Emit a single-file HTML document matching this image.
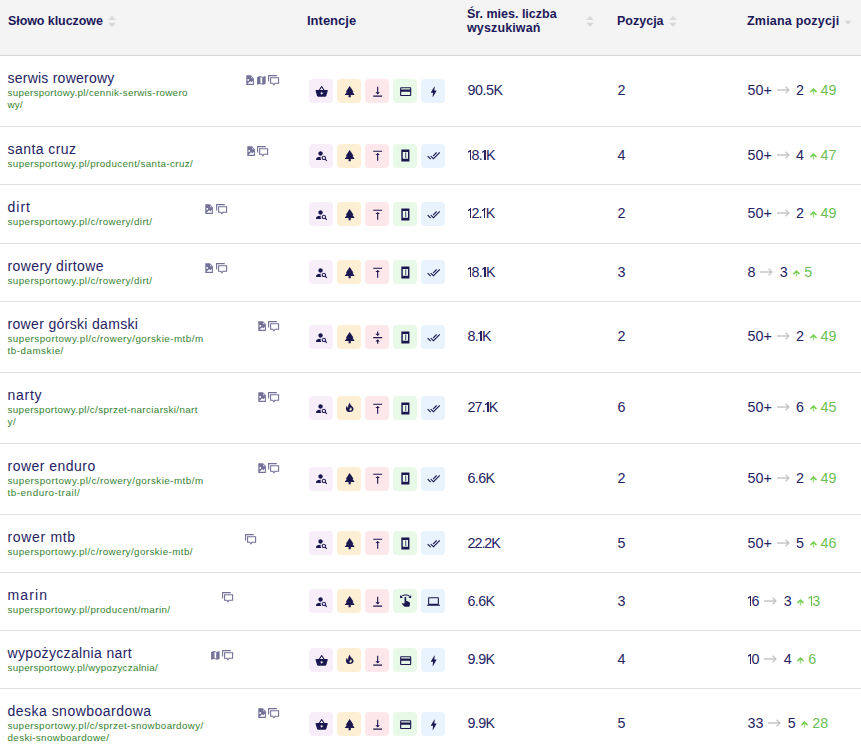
<!DOCTYPE html><html><head><meta charset="utf-8"><style>
html,body{margin:0;padding:0;background:#fff;}
body{width:861px;height:751px;overflow:hidden;position:relative;font-family:"Liberation Sans",sans-serif;}
.t{position:absolute;white-space:nowrap;}
.hd{position:absolute;left:0;top:0;width:861px;height:55px;background:#f4f4f4;}
.ln{position:absolute;left:0;width:861px;height:1px;background:#e0e0e0;}
.kw{font-size:14px;line-height:14px;color:#262364;}
.url{font-size:9.8px;line-height:11px;color:#358230;}
.th{font-size:12.5px;line-height:13px;font-weight:bold;color:#1d195a;}
.num{font-size:14.3px;line-height:14px;color:#262364;}
.b{position:absolute;width:24px;height:24px;border-radius:4px;}
.b svg{position:absolute;left:5px;top:5px;}
.s{position:absolute;line-height:0;}
.ch{display:flex;align-items:baseline;}
.one{display:inline-block;width:3.8px;height:10px;position:relative;margin-left:0.2px}.one::before{content:"";position:absolute;left:2.2px;top:0;width:1.4px;height:10px;background:currentColor}.one::after{content:"";position:absolute;left:0;top:0;width:3.6px;height:3.4px;background:currentColor;clip-path:polygon(100% 0,100% 42%,0 100%,0 58%)}

</style></head><body>
<div class="hd"></div><div class="ln" style="top:55px;background:#d9d9d9"></div>
<span class="t th" style="left:8px;top:15.38px;letter-spacing:-0.077px;">Słowo kluczowe</span>
<span class="t th" style="left:467px;top:8.38px;letter-spacing:0.000px;">Śr. mies. liczba</span>
<span class="t th" style="left:467px;top:22.38px;letter-spacing:0.133px;">wyszukiwań</span>
<span class="t th" style="left:617px;top:15.38px;letter-spacing:0.000px;">Pozycja</span>
<span class="t th" style="left:747px;top:15.38px;letter-spacing:0.200px;">Zmiana pozycji</span>
<span class="t th" style="left:307px;top:13.95px;font-size:13px;">Intencje</span>
<svg class="s" style="left:108px;top:15px" width="9" height="13" viewBox="0 0 9 13"><path d="M0.1 4.9L4 0.9 7.9 4.9z" fill="#d8d8d8"/><path d="M0.1 7.8L4 12 7.9 7.8z" fill="#d8d8d8"/></svg>
<svg class="s" style="left:585.8px;top:15px" width="9" height="13" viewBox="0 0 9 13"><path d="M0.1 4.9L4 0.9 7.9 4.9z" fill="#d8d8d8"/><path d="M0.1 7.8L4 12 7.9 7.8z" fill="#d8d8d8"/></svg>
<svg class="s" style="left:668.5px;top:15px" width="9" height="13" viewBox="0 0 9 13"><path d="M0.1 4.9L4 0.9 7.9 4.9z" fill="#d8d8d8"/><path d="M0.1 7.8L4 12 7.9 7.8z" fill="#d8d8d8"/></svg>
<svg class="s" style="left:844px;top:19.7px" width="8" height="6" viewBox="0 0 8 6"><path d="M0.5 0.8L4 4.5 7.5 0.8z" fill="#d3d3d3"/></svg>
<span class="t kw" style="left:7.5px;top:71.10px;letter-spacing:0.236px;">serwis rowerowy</span>
<span class="t url" style="left:7.5px;top:86.67px;letter-spacing:0.314px;">supersportowy.pl/cennik-serwis-rowero</span>
<span class="t url" style="left:7.5px;top:98.67px;letter-spacing:0.250px;">wy/</span>
<div class="s" style="left:246px;top:75px"><svg width="9" height="11" viewBox="0 0 9 11"><path d="M0.3 0.3H5L7.9 3.2V10H0.3Z" fill="#737197"/><path d="M5.1 1.3V3.2H7Z" fill="#fff" opacity=".75"/><circle cx="2.2" cy="4.9" r="0.95" fill="#fff"/><path d="M1.4 8.7L4.1 6.2L5.4 7.2L6.9 5.8V8.7Z" fill="#fff"/></svg></div>
<div class="s" style="left:257.1px;top:75px"><svg width="10" height="11" viewBox="0 0 10 11"><path d="M3 1.45L5.75 2.3V9.3L3 8.45Z" fill="#fff" stroke="#737197" stroke-width="0.9"/><path d="M0.1 1.9L3 1V8.9L0.1 9.8Z" fill="#737197"/><path d="M5.7 1.9L8.6 1V8.9L5.7 9.8Z" fill="#737197"/></svg></div>
<div class="s" style="left:268px;top:75px"><svg width="12" height="11" viewBox="0 0 12 11"><path d="M0.6 6.6V0.6H8.8" fill="none" stroke="#737197" stroke-width="1.1"/><path d="M2.6 2.7h8v5.5H7l-1.1 1.6-1.1-1.6H2.6z" fill="none" stroke="#737197" stroke-width="1.1"/></svg></div>
<div class="b" style="left:309px;top:79px;background:#f8eefa"><svg style="left:5.7px;top:5.5px" width="13.33" height="13.33" viewBox="0 0 24 24" fill="#1a1650"><path d="M17.21 9l-4.38-6.56a1 1 0 0 0-1.66 0L6.79 9H2a1 1 0 0 0-1 1l.04.27 2.54 9.27A2 2 0 0 0 5.5 21h13a2 2 0 0 0 1.93-1.46l2.54-9.27L23 10a1 1 0 0 0-1-1h-4.79zM9 9l3-4.4L15 9H9zm3 8a2 2 0 1 1 0-4 2 2 0 0 1 0 4z"/></svg></div>
<div class="b" style="left:337px;top:79px;background:#fcefd3"><svg style="left:5.7px;top:5.5px" width="13.33" height="13.33" viewBox="0 0 24 24" fill="#1a1650"><path d="M17 12h2L12 2 5.05 12H7l-3.9 6h6.92v4h3.95v-4H21z"/></svg></div>
<div class="b" style="left:365px;top:79px;background:#fde7eb"><svg style="left:5.7px;top:5.5px" width="13.33" height="13.33" viewBox="0 0 24 24" fill="#1a1650"><path d="M16 13h-3V3h-2v10H8l4 4 4-4zM4 19v2h16v-2H4z"/></svg></div>
<div class="b" style="left:393px;top:79px;background:#e9f9e7"><svg style="left:5.7px;top:5.5px" width="13.33" height="13.33" viewBox="0 0 24 24" fill="#1a1650"><path d="M20 4H4c-1.11 0-1.99.89-1.99 2L2 18c0 1.11.89 2 2 2h16c1.11 0 2-.89 2-2V6c0-1.11-.89-2-2-2zm0 14H4v-6h16v6zm0-10H4V6h16v2z"/></svg></div>
<div class="b" style="left:421px;top:79px;background:#e8f3fd"><svg style="left:5.7px;top:5.5px" width="13.33" height="13.33" viewBox="0 0 24 24" fill="#1a1650"><path d="M11 21h-1l1-7H7.5c-.58 0-.57-.32-.38-.66.19-.34.05-.08.07-.12C8.48 10.94 10.42 7.54 13 3h1l-1 7h3.5c.49 0 .56.33.47.51l-.07.15C12.96 17.55 11 21 11 21z"/></svg></div>
<span class="t num" style="left:467.5px;top:83.05px;letter-spacing:-0.450px;">90.5K</span>
<span class="t num" style="left:617.5px;top:83.05px;">2</span>
<div class="t num ch" style="left:747.5px;top:83.05px"><span>50+</span><svg style="margin:0 6.3px 0 5px;align-self:center;position:relative;top:0px" width="13" height="8" viewBox="0 0 13 8"><path d="M0 4h12M8.6 0.8l3.3 3.2-3.3 3.2" fill="none" stroke="#c6c6c6" stroke-width="1.35"/></svg><span>2</span><svg style="margin:0 4px 0 5.6px" width="7" height="7" viewBox="0 0 7 7"><path d="M3.5 6.6V1.6" fill="none" stroke="#9cdc82" stroke-width="1.3"/><path d="M0.9 3.6l2.6-2.5 2.6 2.5" fill="none" stroke="#74cf52" stroke-width="1.5" stroke-linecap="round"/></svg><span style="color:#6cbf55">49</span></div>
<div class="ln" style="top:126px"></div>
<span class="t kw" style="left:7.5px;top:142.10px;letter-spacing:0.444px;">santa cruz</span>
<span class="t url" style="left:7.5px;top:157.67px;letter-spacing:0.392px;">supersportowy.pl/producent/santa-cruz/</span>
<div class="s" style="left:247px;top:146px"><svg width="9" height="11" viewBox="0 0 9 11"><path d="M0.3 0.3H5L7.9 3.2V10H0.3Z" fill="#737197"/><path d="M5.1 1.3V3.2H7Z" fill="#fff" opacity=".75"/><circle cx="2.2" cy="4.9" r="0.95" fill="#fff"/><path d="M1.4 8.7L4.1 6.2L5.4 7.2L6.9 5.8V8.7Z" fill="#fff"/></svg></div>
<div class="s" style="left:257px;top:146px"><svg width="12" height="11" viewBox="0 0 12 11"><path d="M0.6 6.6V0.6H8.8" fill="none" stroke="#737197" stroke-width="1.1"/><path d="M2.6 2.7h8v5.5H7l-1.1 1.6-1.1-1.6H2.6z" fill="none" stroke="#737197" stroke-width="1.1"/></svg></div>
<div class="b" style="left:309px;top:144px;background:#f8eefa"><svg style="left:5.7px;top:4.5px" width="13.33" height="13.33" viewBox="0 0 24 24" fill="#1a1650"><path d="M10 12c2.21 0 4-1.79 4-4s-1.79-4-4-4-4 1.79-4 4 1.79 4 4 4zm.35 2.01C7.62 13.910 2 15.27 2 18v2h9.54c-2.47-2.76-1.23-5.89-1.19-5.99zm9.08 4.01c.36-.59.57-1.28.57-2.02 0-2.21-1.79-4-4-4s-4 1.79-4 4 1.79 4 4 4c.74 0 1.43-.22 2.02-.57L20.59 22 22 20.59l-2.57-2.57zM16 18c-1.1 0-2-.9-2-2s.9-2 2-2 2 .9 2 2-.9 2-2 2z"/></svg></div>
<div class="b" style="left:337px;top:144px;background:#fcefd3"><svg style="left:5.7px;top:4.5px" width="13.33" height="13.33" viewBox="0 0 24 24" fill="#1a1650"><path d="M17 12h2L12 2 5.05 12H7l-3.9 6h6.92v4h3.95v-4H21z"/></svg></div>
<div class="b" style="left:365px;top:144px;background:#fde7eb"><svg style="left:5.7px;top:4.5px" width="13.33" height="13.33" viewBox="0 0 24 24" fill="#1a1650"><path d="M8 11h3v10h2V11h3l-4-4-4 4zM4 3v2h16V3H4z"/></svg></div>
<div class="b" style="left:393px;top:144px;background:#e9f9e7"><svg style="left:5.7px;top:4.5px" width="13.33" height="13.33" viewBox="0 0 24 24" fill="#1a1650"><path fill-rule="evenodd" d="M4.2 0.7H18.8V22.3H4.2ZM6.8 5.3V17.6H16.2V5.3Z"/><path d="M11.5 6.5H12.9V16.4H11.5Z"/></svg></div>
<div class="b" style="left:421px;top:144px;background:#e8f3fd"><svg style="left:5.7px;top:4.5px" width="13.33" height="13.33" viewBox="0 0 24 24" fill="#1a1650"><path d="M18 7l-1.41-1.41-6.34 6.34 1.41 1.41L18 7zm4.24-1.41L11.66 16.17 7.48 12l-1.41 1.41L11.66 19l12-12-1.42-1.41zM.41 13.41L6 19l1.41-1.41L1.83 12 .41 13.41z"/></svg></div>
<span class="t num" style="left:467.5px;top:147.54px;letter-spacing:-0.725px;"><i class="one"></i>8.<i class="one"></i>K</span>
<span class="t num" style="left:617.5px;top:147.54px;">4</span>
<div class="t num ch" style="left:747.5px;top:147.54px"><span>50+</span><svg style="margin:0 6.3px 0 5px;align-self:center;position:relative;top:0px" width="13" height="8" viewBox="0 0 13 8"><path d="M0 4h12M8.6 0.8l3.3 3.2-3.3 3.2" fill="none" stroke="#c6c6c6" stroke-width="1.35"/></svg><span>4</span><svg style="margin:0 4px 0 5.6px" width="7" height="7" viewBox="0 0 7 7"><path d="M3.5 6.6V1.6" fill="none" stroke="#9cdc82" stroke-width="1.3"/><path d="M0.9 3.6l2.6-2.5 2.6 2.5" fill="none" stroke="#74cf52" stroke-width="1.5" stroke-linecap="round"/></svg><span style="color:#6cbf55">47</span></div>
<div class="ln" style="top:184px"></div>
<span class="t kw" style="left:7.5px;top:200.10px;letter-spacing:1.000px;">dirt</span>
<span class="t url" style="left:7.5px;top:215.67px;letter-spacing:0.410px;">supersportowy.pl/c/rowery/dirt/</span>
<div class="s" style="left:205px;top:204px"><svg width="9" height="11" viewBox="0 0 9 11"><path d="M0.3 0.3H5L7.9 3.2V10H0.3Z" fill="#737197"/><path d="M5.1 1.3V3.2H7Z" fill="#fff" opacity=".75"/><circle cx="2.2" cy="4.9" r="0.95" fill="#fff"/><path d="M1.4 8.7L4.1 6.2L5.4 7.2L6.9 5.8V8.7Z" fill="#fff"/></svg></div>
<div class="s" style="left:216px;top:204px"><svg width="12" height="11" viewBox="0 0 12 11"><path d="M0.6 6.6V0.6H8.8" fill="none" stroke="#737197" stroke-width="1.1"/><path d="M2.6 2.7h8v5.5H7l-1.1 1.6-1.1-1.6H2.6z" fill="none" stroke="#737197" stroke-width="1.1"/></svg></div>
<div class="b" style="left:309px;top:202px;background:#f8eefa"><svg style="left:5.7px;top:5.5px" width="13.33" height="13.33" viewBox="0 0 24 24" fill="#1a1650"><path d="M10 12c2.21 0 4-1.79 4-4s-1.79-4-4-4-4 1.79-4 4 1.79 4 4 4zm.35 2.01C7.62 13.910 2 15.27 2 18v2h9.54c-2.47-2.76-1.23-5.89-1.19-5.99zm9.08 4.01c.36-.59.57-1.28.57-2.02 0-2.21-1.79-4-4-4s-4 1.79-4 4 1.79 4 4 4c.74 0 1.43-.22 2.02-.57L20.59 22 22 20.59l-2.57-2.57zM16 18c-1.1 0-2-.9-2-2s.9-2 2-2 2 .9 2 2-.9 2-2 2z"/></svg></div>
<div class="b" style="left:337px;top:202px;background:#fcefd3"><svg style="left:5.7px;top:5.5px" width="13.33" height="13.33" viewBox="0 0 24 24" fill="#1a1650"><path d="M17 12h2L12 2 5.05 12H7l-3.9 6h6.92v4h3.95v-4H21z"/></svg></div>
<div class="b" style="left:365px;top:202px;background:#fde7eb"><svg style="left:5.7px;top:5.5px" width="13.33" height="13.33" viewBox="0 0 24 24" fill="#1a1650"><path d="M8 11h3v10h2V11h3l-4-4-4 4zM4 3v2h16V3H4z"/></svg></div>
<div class="b" style="left:393px;top:202px;background:#e9f9e7"><svg style="left:5.7px;top:5.5px" width="13.33" height="13.33" viewBox="0 0 24 24" fill="#1a1650"><path fill-rule="evenodd" d="M4.2 0.7H18.8V22.3H4.2ZM6.8 5.3V17.6H16.2V5.3Z"/><path d="M11.5 6.5H12.9V16.4H11.5Z"/></svg></div>
<div class="b" style="left:421px;top:202px;background:#e8f3fd"><svg style="left:5.7px;top:5.5px" width="13.33" height="13.33" viewBox="0 0 24 24" fill="#1a1650"><path d="M18 7l-1.41-1.41-6.34 6.34 1.41 1.41L18 7zm4.24-1.41L11.66 16.17 7.48 12l-1.41 1.41L11.66 19l12-12-1.42-1.41zM.41 13.41L6 19l1.41-1.41L1.83 12 .41 13.41z"/></svg></div>
<span class="t num" style="left:467.5px;top:206.04px;letter-spacing:-0.850px;"><i class="one"></i>2.<i class="one"></i>K</span>
<span class="t num" style="left:617.5px;top:206.04px;">2</span>
<div class="t num ch" style="left:747.5px;top:206.04px"><span>50+</span><svg style="margin:0 6.3px 0 5px;align-self:center;position:relative;top:0px" width="13" height="8" viewBox="0 0 13 8"><path d="M0 4h12M8.6 0.8l3.3 3.2-3.3 3.2" fill="none" stroke="#c6c6c6" stroke-width="1.35"/></svg><span>2</span><svg style="margin:0 4px 0 5.6px" width="7" height="7" viewBox="0 0 7 7"><path d="M3.5 6.6V1.6" fill="none" stroke="#9cdc82" stroke-width="1.3"/><path d="M0.9 3.6l2.6-2.5 2.6 2.5" fill="none" stroke="#74cf52" stroke-width="1.5" stroke-linecap="round"/></svg><span style="color:#6cbf55">49</span></div>
<div class="ln" style="top:243px"></div>
<span class="t kw" style="left:7.5px;top:259.10px;letter-spacing:0.385px;">rowery dirtowe</span>
<span class="t url" style="left:7.5px;top:274.67px;letter-spacing:0.410px;">supersportowy.pl/c/rowery/dirt/</span>
<div class="s" style="left:205px;top:263px"><svg width="9" height="11" viewBox="0 0 9 11"><path d="M0.3 0.3H5L7.9 3.2V10H0.3Z" fill="#737197"/><path d="M5.1 1.3V3.2H7Z" fill="#fff" opacity=".75"/><circle cx="2.2" cy="4.9" r="0.95" fill="#fff"/><path d="M1.4 8.7L4.1 6.2L5.4 7.2L6.9 5.8V8.7Z" fill="#fff"/></svg></div>
<div class="s" style="left:216px;top:263px"><svg width="12" height="11" viewBox="0 0 12 11"><path d="M0.6 6.6V0.6H8.8" fill="none" stroke="#737197" stroke-width="1.1"/><path d="M2.6 2.7h8v5.5H7l-1.1 1.6-1.1-1.6H2.6z" fill="none" stroke="#737197" stroke-width="1.1"/></svg></div>
<div class="b" style="left:309px;top:260px;background:#f8eefa"><svg style="left:5.7px;top:5.5px" width="13.33" height="13.33" viewBox="0 0 24 24" fill="#1a1650"><path d="M10 12c2.21 0 4-1.79 4-4s-1.79-4-4-4-4 1.79-4 4 1.79 4 4 4zm.35 2.01C7.62 13.910 2 15.27 2 18v2h9.54c-2.47-2.76-1.23-5.89-1.19-5.99zm9.08 4.01c.36-.59.57-1.28.57-2.02 0-2.21-1.79-4-4-4s-4 1.79-4 4 1.79 4 4 4c.74 0 1.43-.22 2.02-.57L20.59 22 22 20.59l-2.57-2.57zM16 18c-1.1 0-2-.9-2-2s.9-2 2-2 2 .9 2 2-.9 2-2 2z"/></svg></div>
<div class="b" style="left:337px;top:260px;background:#fcefd3"><svg style="left:5.7px;top:5.5px" width="13.33" height="13.33" viewBox="0 0 24 24" fill="#1a1650"><path d="M17 12h2L12 2 5.05 12H7l-3.9 6h6.92v4h3.95v-4H21z"/></svg></div>
<div class="b" style="left:365px;top:260px;background:#fde7eb"><svg style="left:5.7px;top:5.5px" width="13.33" height="13.33" viewBox="0 0 24 24" fill="#1a1650"><path d="M8 11h3v10h2V11h3l-4-4-4 4zM4 3v2h16V3H4z"/></svg></div>
<div class="b" style="left:393px;top:260px;background:#e9f9e7"><svg style="left:5.7px;top:5.5px" width="13.33" height="13.33" viewBox="0 0 24 24" fill="#1a1650"><path fill-rule="evenodd" d="M4.2 0.7H18.8V22.3H4.2ZM6.8 5.3V17.6H16.2V5.3Z"/><path d="M11.5 6.5H12.9V16.4H11.5Z"/></svg></div>
<div class="b" style="left:421px;top:260px;background:#e8f3fd"><svg style="left:5.7px;top:5.5px" width="13.33" height="13.33" viewBox="0 0 24 24" fill="#1a1650"><path d="M18 7l-1.41-1.41-6.34 6.34 1.41 1.41L18 7zm4.24-1.41L11.66 16.17 7.48 12l-1.41 1.41L11.66 19l12-12-1.42-1.41zM.41 13.41L6 19l1.41-1.41L1.83 12 .41 13.41z"/></svg></div>
<span class="t num" style="left:467.5px;top:264.54px;letter-spacing:-0.725px;"><i class="one"></i>8.<i class="one"></i>K</span>
<span class="t num" style="left:617.5px;top:264.54px;">3</span>
<div class="t num ch" style="left:747.5px;top:264.54px"><span>8</span><svg style="margin:0 6.3px 0 5px;align-self:center;position:relative;top:0px" width="13" height="8" viewBox="0 0 13 8"><path d="M0 4h12M8.6 0.8l3.3 3.2-3.3 3.2" fill="none" stroke="#c6c6c6" stroke-width="1.35"/></svg><span>3</span><svg style="margin:0 4px 0 5.6px" width="7" height="7" viewBox="0 0 7 7"><path d="M3.5 6.6V1.6" fill="none" stroke="#9cdc82" stroke-width="1.3"/><path d="M0.9 3.6l2.6-2.5 2.6 2.5" fill="none" stroke="#74cf52" stroke-width="1.5" stroke-linecap="round"/></svg><span style="color:#6cbf55">5</span></div>
<div class="ln" style="top:301px"></div>
<span class="t kw" style="left:7.5px;top:317.10px;letter-spacing:0.333px;">rower górski damski</span>
<span class="t url" style="left:7.5px;top:332.67px;letter-spacing:0.466px;">supersportowy.pl/c/rowery/gorskie-mtb/m</span>
<span class="t url" style="left:7.5px;top:344.67px;letter-spacing:0.520px;">tb-damskie/</span>
<div class="s" style="left:258px;top:321px"><svg width="9" height="11" viewBox="0 0 9 11"><path d="M0.3 0.3H5L7.9 3.2V10H0.3Z" fill="#737197"/><path d="M5.1 1.3V3.2H7Z" fill="#fff" opacity=".75"/><circle cx="2.2" cy="4.9" r="0.95" fill="#fff"/><path d="M1.4 8.7L4.1 6.2L5.4 7.2L6.9 5.8V8.7Z" fill="#fff"/></svg></div>
<div class="s" style="left:268px;top:321px"><svg width="12" height="11" viewBox="0 0 12 11"><path d="M0.6 6.6V0.6H8.8" fill="none" stroke="#737197" stroke-width="1.1"/><path d="M2.6 2.7h8v5.5H7l-1.1 1.6-1.1-1.6H2.6z" fill="none" stroke="#737197" stroke-width="1.1"/></svg></div>
<div class="b" style="left:309px;top:325px;background:#f8eefa"><svg style="left:5.7px;top:5.5px" width="13.33" height="13.33" viewBox="0 0 24 24" fill="#1a1650"><path d="M10 12c2.21 0 4-1.79 4-4s-1.79-4-4-4-4 1.79-4 4 1.79 4 4 4zm.35 2.01C7.62 13.910 2 15.27 2 18v2h9.54c-2.47-2.76-1.23-5.89-1.19-5.99zm9.08 4.01c.36-.59.57-1.28.57-2.02 0-2.21-1.79-4-4-4s-4 1.79-4 4 1.79 4 4 4c.74 0 1.43-.22 2.02-.57L20.59 22 22 20.59l-2.57-2.57zM16 18c-1.1 0-2-.9-2-2s.9-2 2-2 2 .9 2 2-.9 2-2 2z"/></svg></div>
<div class="b" style="left:337px;top:325px;background:#fcefd3"><svg style="left:5.7px;top:5.5px" width="13.33" height="13.33" viewBox="0 0 24 24" fill="#1a1650"><path d="M17 12h2L12 2 5.05 12H7l-3.9 6h6.92v4h3.95v-4H21z"/></svg></div>
<div class="b" style="left:365px;top:325px;background:#fde7eb"><svg style="left:5.7px;top:5.5px" width="13.33" height="13.33" viewBox="0 0 24 24" fill="#1a1650"><path d="M8 19h3v4h2v-4h3l-4-4-4 4zm8-14h-3V1h-2v4H8l4 4 4-4zM4 11v2h16v-2H4z"/></svg></div>
<div class="b" style="left:393px;top:325px;background:#e9f9e7"><svg style="left:5.7px;top:5.5px" width="13.33" height="13.33" viewBox="0 0 24 24" fill="#1a1650"><path fill-rule="evenodd" d="M4.2 0.7H18.8V22.3H4.2ZM6.8 5.3V17.6H16.2V5.3Z"/><path d="M11.5 6.5H12.9V16.4H11.5Z"/></svg></div>
<div class="b" style="left:421px;top:325px;background:#e8f3fd"><svg style="left:5.7px;top:5.5px" width="13.33" height="13.33" viewBox="0 0 24 24" fill="#1a1650"><path d="M18 7l-1.41-1.41-6.34 6.34 1.41 1.41L18 7zm4.24-1.41L11.66 16.17 7.48 12l-1.41 1.41L11.66 19l12-12-1.42-1.41zM.41 13.41L6 19l1.41-1.41L1.83 12 .41 13.41z"/></svg></div>
<span class="t num" style="left:467.5px;top:329.04px;letter-spacing:-0.667px;">8.<i class="one"></i>K</span>
<span class="t num" style="left:617.5px;top:329.04px;">2</span>
<div class="t num ch" style="left:747.5px;top:329.04px"><span>50+</span><svg style="margin:0 6.3px 0 5px;align-self:center;position:relative;top:0px" width="13" height="8" viewBox="0 0 13 8"><path d="M0 4h12M8.6 0.8l3.3 3.2-3.3 3.2" fill="none" stroke="#c6c6c6" stroke-width="1.35"/></svg><span>2</span><svg style="margin:0 4px 0 5.6px" width="7" height="7" viewBox="0 0 7 7"><path d="M3.5 6.6V1.6" fill="none" stroke="#9cdc82" stroke-width="1.3"/><path d="M0.9 3.6l2.6-2.5 2.6 2.5" fill="none" stroke="#74cf52" stroke-width="1.5" stroke-linecap="round"/></svg><span style="color:#6cbf55">49</span></div>
<div class="ln" style="top:372px"></div>
<span class="t kw" style="left:7.5px;top:388.10px;letter-spacing:0.750px;">narty</span>
<span class="t url" style="left:7.5px;top:403.67px;letter-spacing:0.370px;">supersportowy.pl/c/sprzet-narciarski/nart</span>
<span class="t url" style="left:7.5px;top:415.67px;letter-spacing:0.700px;">y/</span>
<div class="s" style="left:258px;top:392px"><svg width="9" height="11" viewBox="0 0 9 11"><path d="M0.3 0.3H5L7.9 3.2V10H0.3Z" fill="#737197"/><path d="M5.1 1.3V3.2H7Z" fill="#fff" opacity=".75"/><circle cx="2.2" cy="4.9" r="0.95" fill="#fff"/><path d="M1.4 8.7L4.1 6.2L5.4 7.2L6.9 5.8V8.7Z" fill="#fff"/></svg></div>
<div class="s" style="left:268px;top:392px"><svg width="12" height="11" viewBox="0 0 12 11"><path d="M0.6 6.6V0.6H8.8" fill="none" stroke="#737197" stroke-width="1.1"/><path d="M2.6 2.7h8v5.5H7l-1.1 1.6-1.1-1.6H2.6z" fill="none" stroke="#737197" stroke-width="1.1"/></svg></div>
<div class="b" style="left:309px;top:396px;background:#f8eefa"><svg style="left:5.7px;top:5.5px" width="13.33" height="13.33" viewBox="0 0 24 24" fill="#1a1650"><path d="M10 12c2.21 0 4-1.79 4-4s-1.79-4-4-4-4 1.79-4 4 1.79 4 4 4zm.35 2.01C7.62 13.910 2 15.27 2 18v2h9.54c-2.47-2.76-1.23-5.89-1.19-5.99zm9.08 4.01c.36-.59.57-1.28.57-2.02 0-2.21-1.79-4-4-4s-4 1.79-4 4 1.79 4 4 4c.74 0 1.43-.22 2.02-.57L20.59 22 22 20.59l-2.57-2.57zM16 18c-1.1 0-2-.9-2-2s.9-2 2-2 2 .9 2 2-.9 2-2 2z"/></svg></div>
<div class="b" style="left:337px;top:396px;background:#fcefd3"><svg style="left:5.7px;top:5.5px" width="13.33" height="13.33" viewBox="0 0 24 24" fill="#1a1650"><path fill-rule="evenodd" d="M12 18.2C8.2 18.2 5.3 15.6 5.3 12C5.3 9.8 6.2 8 7.2 6.8C7.2 8.6 8 9.8 9.2 10.2C9 6.5 10.5 3 12.6 0.9C12.4 4 14 5.6 15.8 7.4C17.8 9.3 19 11 19 13.2C19 16.1 15.9 18.2 12 18.2ZM12.6 15.6C14.4 15.6 15.8 14.3 15.8 12.7C15.8 11.3 14.8 10.2 13.6 9.4C13.8 11 13 12.2 11.8 12.6C11.6 13.9 11.5 15.6 12.6 15.6Z"/></svg></div>
<div class="b" style="left:365px;top:396px;background:#fde7eb"><svg style="left:5.7px;top:5.5px" width="13.33" height="13.33" viewBox="0 0 24 24" fill="#1a1650"><path d="M8 11h3v10h2V11h3l-4-4-4 4zM4 3v2h16V3H4z"/></svg></div>
<div class="b" style="left:393px;top:396px;background:#e9f9e7"><svg style="left:5.7px;top:5.5px" width="13.33" height="13.33" viewBox="0 0 24 24" fill="#1a1650"><path fill-rule="evenodd" d="M4.2 0.7H18.8V22.3H4.2ZM6.8 5.3V17.6H16.2V5.3Z"/><path d="M11.5 6.5H12.9V16.4H11.5Z"/></svg></div>
<div class="b" style="left:421px;top:396px;background:#e8f3fd"><svg style="left:5.7px;top:5.5px" width="13.33" height="13.33" viewBox="0 0 24 24" fill="#1a1650"><path d="M18 7l-1.41-1.41-6.34 6.34 1.41 1.41L18 7zm4.24-1.41L11.66 16.17 7.48 12l-1.41 1.41L11.66 19l12-12-1.42-1.41zM.41 13.41L6 19l1.41-1.41L1.83 12 .41 13.41z"/></svg></div>
<span class="t num" style="left:467.5px;top:400.04px;letter-spacing:-0.875px;">27.<i class="one"></i>K</span>
<span class="t num" style="left:617.5px;top:400.04px;">6</span>
<div class="t num ch" style="left:747.5px;top:400.04px"><span>50+</span><svg style="margin:0 6.3px 0 5px;align-self:center;position:relative;top:0px" width="13" height="8" viewBox="0 0 13 8"><path d="M0 4h12M8.6 0.8l3.3 3.2-3.3 3.2" fill="none" stroke="#c6c6c6" stroke-width="1.35"/></svg><span>6</span><svg style="margin:0 4px 0 5.6px" width="7" height="7" viewBox="0 0 7 7"><path d="M3.5 6.6V1.6" fill="none" stroke="#9cdc82" stroke-width="1.3"/><path d="M0.9 3.6l2.6-2.5 2.6 2.5" fill="none" stroke="#74cf52" stroke-width="1.5" stroke-linecap="round"/></svg><span style="color:#6cbf55">45</span></div>
<div class="ln" style="top:443px"></div>
<span class="t kw" style="left:7.5px;top:459.10px;letter-spacing:0.482px;">rower enduro</span>
<span class="t url" style="left:7.5px;top:474.67px;letter-spacing:0.466px;">supersportowy.pl/c/rowery/gorskie-mtb/m</span>
<span class="t url" style="left:7.5px;top:486.67px;letter-spacing:0.560px;">tb-enduro-trail/</span>
<div class="s" style="left:258px;top:463px"><svg width="9" height="11" viewBox="0 0 9 11"><path d="M0.3 0.3H5L7.9 3.2V10H0.3Z" fill="#737197"/><path d="M5.1 1.3V3.2H7Z" fill="#fff" opacity=".75"/><circle cx="2.2" cy="4.9" r="0.95" fill="#fff"/><path d="M1.4 8.7L4.1 6.2L5.4 7.2L6.9 5.8V8.7Z" fill="#fff"/></svg></div>
<div class="s" style="left:268px;top:463px"><svg width="12" height="11" viewBox="0 0 12 11"><path d="M0.6 6.6V0.6H8.8" fill="none" stroke="#737197" stroke-width="1.1"/><path d="M2.6 2.7h8v5.5H7l-1.1 1.6-1.1-1.6H2.6z" fill="none" stroke="#737197" stroke-width="1.1"/></svg></div>
<div class="b" style="left:309px;top:467px;background:#f8eefa"><svg style="left:5.7px;top:4.5px" width="13.33" height="13.33" viewBox="0 0 24 24" fill="#1a1650"><path d="M10 12c2.21 0 4-1.79 4-4s-1.79-4-4-4-4 1.79-4 4 1.79 4 4 4zm.35 2.01C7.62 13.910 2 15.27 2 18v2h9.54c-2.47-2.76-1.23-5.89-1.19-5.99zm9.08 4.01c.36-.59.57-1.28.57-2.02 0-2.21-1.79-4-4-4s-4 1.79-4 4 1.79 4 4 4c.74 0 1.43-.22 2.02-.57L20.59 22 22 20.59l-2.57-2.57zM16 18c-1.1 0-2-.9-2-2s.9-2 2-2 2 .9 2 2-.9 2-2 2z"/></svg></div>
<div class="b" style="left:337px;top:467px;background:#fcefd3"><svg style="left:5.7px;top:4.5px" width="13.33" height="13.33" viewBox="0 0 24 24" fill="#1a1650"><path d="M17 12h2L12 2 5.05 12H7l-3.9 6h6.92v4h3.95v-4H21z"/></svg></div>
<div class="b" style="left:365px;top:467px;background:#fde7eb"><svg style="left:5.7px;top:4.5px" width="13.33" height="13.33" viewBox="0 0 24 24" fill="#1a1650"><path d="M8 11h3v10h2V11h3l-4-4-4 4zM4 3v2h16V3H4z"/></svg></div>
<div class="b" style="left:393px;top:467px;background:#e9f9e7"><svg style="left:5.7px;top:4.5px" width="13.33" height="13.33" viewBox="0 0 24 24" fill="#1a1650"><path fill-rule="evenodd" d="M4.2 0.7H18.8V22.3H4.2ZM6.8 5.3V17.6H16.2V5.3Z"/><path d="M11.5 6.5H12.9V16.4H11.5Z"/></svg></div>
<div class="b" style="left:421px;top:467px;background:#e8f3fd"><svg style="left:5.7px;top:4.5px" width="13.33" height="13.33" viewBox="0 0 24 24" fill="#1a1650"><path d="M18 7l-1.41-1.41-6.34 6.34 1.41 1.41L18 7zm4.24-1.41L11.66 16.17 7.48 12l-1.41 1.41L11.66 19l12-12-1.42-1.41zM.41 13.41L6 19l1.41-1.41L1.83 12 .41 13.41z"/></svg></div>
<span class="t num" style="left:467.5px;top:471.04px;letter-spacing:-0.633px;">6.6K</span>
<span class="t num" style="left:617.5px;top:471.04px;">2</span>
<div class="t num ch" style="left:747.5px;top:471.04px"><span>50+</span><svg style="margin:0 6.3px 0 5px;align-self:center;position:relative;top:0px" width="13" height="8" viewBox="0 0 13 8"><path d="M0 4h12M8.6 0.8l3.3 3.2-3.3 3.2" fill="none" stroke="#c6c6c6" stroke-width="1.35"/></svg><span>2</span><svg style="margin:0 4px 0 5.6px" width="7" height="7" viewBox="0 0 7 7"><path d="M3.5 6.6V1.6" fill="none" stroke="#9cdc82" stroke-width="1.3"/><path d="M0.9 3.6l2.6-2.5 2.6 2.5" fill="none" stroke="#74cf52" stroke-width="1.5" stroke-linecap="round"/></svg><span style="color:#6cbf55">49</span></div>
<div class="ln" style="top:514px"></div>
<span class="t kw" style="left:7.5px;top:530.10px;letter-spacing:0.675px;">rower mtb</span>
<span class="t url" style="left:7.5px;top:545.67px;letter-spacing:0.414px;">supersportowy.pl/c/rowery/gorskie-mtb/</span>
<div class="s" style="left:245px;top:534px"><svg width="12" height="11" viewBox="0 0 12 11"><path d="M0.6 6.6V0.6H8.8" fill="none" stroke="#737197" stroke-width="1.1"/><path d="M2.6 2.7h8v5.5H7l-1.1 1.6-1.1-1.6H2.6z" fill="none" stroke="#737197" stroke-width="1.1"/></svg></div>
<div class="b" style="left:309px;top:531px;background:#f8eefa"><svg style="left:5.7px;top:5.5px" width="13.33" height="13.33" viewBox="0 0 24 24" fill="#1a1650"><path d="M10 12c2.21 0 4-1.79 4-4s-1.79-4-4-4-4 1.79-4 4 1.79 4 4 4zm.35 2.01C7.62 13.910 2 15.27 2 18v2h9.54c-2.47-2.76-1.23-5.89-1.19-5.99zm9.08 4.01c.36-.59.57-1.28.57-2.02 0-2.21-1.79-4-4-4s-4 1.79-4 4 1.79 4 4 4c.74 0 1.43-.22 2.02-.57L20.59 22 22 20.59l-2.57-2.57zM16 18c-1.1 0-2-.9-2-2s.9-2 2-2 2 .9 2 2-.9 2-2 2z"/></svg></div>
<div class="b" style="left:337px;top:531px;background:#fcefd3"><svg style="left:5.7px;top:5.5px" width="13.33" height="13.33" viewBox="0 0 24 24" fill="#1a1650"><path d="M17 12h2L12 2 5.05 12H7l-3.9 6h6.92v4h3.95v-4H21z"/></svg></div>
<div class="b" style="left:365px;top:531px;background:#fde7eb"><svg style="left:5.7px;top:5.5px" width="13.33" height="13.33" viewBox="0 0 24 24" fill="#1a1650"><path d="M8 11h3v10h2V11h3l-4-4-4 4zM4 3v2h16V3H4z"/></svg></div>
<div class="b" style="left:393px;top:531px;background:#e9f9e7"><svg style="left:5.7px;top:5.5px" width="13.33" height="13.33" viewBox="0 0 24 24" fill="#1a1650"><path fill-rule="evenodd" d="M4.2 0.7H18.8V22.3H4.2ZM6.8 5.3V17.6H16.2V5.3Z"/><path d="M11.5 6.5H12.9V16.4H11.5Z"/></svg></div>
<div class="b" style="left:421px;top:531px;background:#e8f3fd"><svg style="left:5.7px;top:5.5px" width="13.33" height="13.33" viewBox="0 0 24 24" fill="#1a1650"><path d="M18 7l-1.41-1.41-6.34 6.34 1.41 1.41L18 7zm4.24-1.41L11.66 16.17 7.48 12l-1.41 1.41L11.66 19l12-12-1.42-1.41zM.41 13.41L6 19l1.41-1.41L1.83 12 .41 13.41z"/></svg></div>
<span class="t num" style="left:467.5px;top:535.55px;letter-spacing:-1.000px;">22.2K</span>
<span class="t num" style="left:617.5px;top:535.55px;">5</span>
<div class="t num ch" style="left:747.5px;top:535.55px"><span>50+</span><svg style="margin:0 6.3px 0 5px;align-self:center;position:relative;top:0px" width="13" height="8" viewBox="0 0 13 8"><path d="M0 4h12M8.6 0.8l3.3 3.2-3.3 3.2" fill="none" stroke="#c6c6c6" stroke-width="1.35"/></svg><span>5</span><svg style="margin:0 4px 0 5.6px" width="7" height="7" viewBox="0 0 7 7"><path d="M3.5 6.6V1.6" fill="none" stroke="#9cdc82" stroke-width="1.3"/><path d="M0.9 3.6l2.6-2.5 2.6 2.5" fill="none" stroke="#74cf52" stroke-width="1.5" stroke-linecap="round"/></svg><span style="color:#6cbf55">46</span></div>
<div class="ln" style="top:572px"></div>
<span class="t kw" style="left:7.5px;top:588.10px;letter-spacing:1.150px;">marin</span>
<span class="t url" style="left:7.5px;top:603.67px;letter-spacing:0.406px;">supersportowy.pl/producent/marin/</span>
<div class="s" style="left:222px;top:592px"><svg width="12" height="11" viewBox="0 0 12 11"><path d="M0.6 6.6V0.6H8.8" fill="none" stroke="#737197" stroke-width="1.1"/><path d="M2.6 2.7h8v5.5H7l-1.1 1.6-1.1-1.6H2.6z" fill="none" stroke="#737197" stroke-width="1.1"/></svg></div>
<div class="b" style="left:309px;top:589px;background:#f8eefa"><svg style="left:5.7px;top:5.5px" width="13.33" height="13.33" viewBox="0 0 24 24" fill="#1a1650"><path d="M10 12c2.21 0 4-1.79 4-4s-1.79-4-4-4-4 1.79-4 4 1.79 4 4 4zm.35 2.01C7.62 13.910 2 15.27 2 18v2h9.54c-2.47-2.76-1.23-5.89-1.19-5.99zm9.08 4.01c.36-.59.57-1.28.57-2.02 0-2.21-1.79-4-4-4s-4 1.79-4 4 1.79 4 4 4c.74 0 1.43-.22 2.02-.57L20.59 22 22 20.59l-2.57-2.57zM16 18c-1.1 0-2-.9-2-2s.9-2 2-2 2 .9 2 2-.9 2-2 2z"/></svg></div>
<div class="b" style="left:337px;top:589px;background:#fcefd3"><svg style="left:5.7px;top:5.5px" width="13.33" height="13.33" viewBox="0 0 24 24" fill="#1a1650"><path d="M17 12h2L12 2 5.05 12H7l-3.9 6h6.92v4h3.95v-4H21z"/></svg></div>
<div class="b" style="left:365px;top:589px;background:#fde7eb"><svg style="left:5.7px;top:5.5px" width="13.33" height="13.33" viewBox="0 0 24 24" fill="#1a1650"><path d="M16 13h-3V3h-2v10H8l4 4 4-4zM4 19v2h16v-2H4z"/></svg></div>
<div class="b" style="left:393px;top:589px;background:#e9f9e7"><svg style="left:5.6px;top:5.1px" width="13.3" height="13.3" viewBox="0 0 24 24" fill="#1a1650"><path d="M18.89 14.75l-4.09-2.04c-.28-.14-.58-.21-.89-.21H13v-6c0-.83-.67-1.5-1.5-1.5S10 5.67 10 6.5v10.74l-3.25-.74c-.33-.07-.68.03-.92.28l-.83.84 4.54 4.79c.38.38 1.14.59 1.67.59h6.16c1 0 1.84-.73 1.98-1.72l.63-4.46c.12-.85-.32-1.68-1.09-2.07zM20.13 3.87C18.69 2.17 15.6 1 12 1S5.31 2.17 3.87 3.87L2 2v5h5L4.93 4.93c1-1.29 3.7-2.43 7.07-2.43s6.07 1.14 7.07 2.43L17 7h5V2l-1.87 1.87z"/></svg></div>
<div class="b" style="left:421px;top:589px;background:#e8f3fd"><svg style="left:5.7px;top:5.6px" width="13" height="13" viewBox="0 0 24 24" fill="#1a1650"><path d="M20 18c1.1 0 1.99-.9 1.99-2L22 6c0-1.1-.9-2-2-2H4c-1.1 0-2 .9-2 2v10c0 1.1.9 2 2 2H0v2h24v-2h-4zM4 6h16v10H4V6z"/></svg></div>
<span class="t num" style="left:467.5px;top:593.55px;letter-spacing:-0.633px;">6.6K</span>
<span class="t num" style="left:617.5px;top:593.55px;">3</span>
<div class="t num ch" style="left:747.5px;top:593.55px"><span><i class="one"></i>6</span><svg style="margin:0 6.3px 0 5px;align-self:center;position:relative;top:0px" width="13" height="8" viewBox="0 0 13 8"><path d="M0 4h12M8.6 0.8l3.3 3.2-3.3 3.2" fill="none" stroke="#c6c6c6" stroke-width="1.35"/></svg><span>3</span><svg style="margin:0 4px 0 5.6px" width="7" height="7" viewBox="0 0 7 7"><path d="M3.5 6.6V1.6" fill="none" stroke="#9cdc82" stroke-width="1.3"/><path d="M0.9 3.6l2.6-2.5 2.6 2.5" fill="none" stroke="#74cf52" stroke-width="1.5" stroke-linecap="round"/></svg><span style="color:#6cbf55"><i class="one"></i>3</span></div>
<div class="ln" style="top:630px"></div>
<span class="t kw" style="left:7.5px;top:646.10px;letter-spacing:0.341px;">wypożyczalnia nart</span>
<span class="t url" style="left:7.5px;top:661.67px;letter-spacing:0.277px;">supersportowy.pl/wypozyczalnia/</span>
<div class="s" style="left:211.1px;top:650px"><svg width="10" height="11" viewBox="0 0 10 11"><path d="M3 1.45L5.75 2.3V9.3L3 8.45Z" fill="#fff" stroke="#737197" stroke-width="0.9"/><path d="M0.1 1.9L3 1V8.9L0.1 9.8Z" fill="#737197"/><path d="M5.7 1.9L8.6 1V8.9L5.7 9.8Z" fill="#737197"/></svg></div>
<div class="s" style="left:222px;top:650px"><svg width="12" height="11" viewBox="0 0 12 11"><path d="M0.6 6.6V0.6H8.8" fill="none" stroke="#737197" stroke-width="1.1"/><path d="M2.6 2.7h8v5.5H7l-1.1 1.6-1.1-1.6H2.6z" fill="none" stroke="#737197" stroke-width="1.1"/></svg></div>
<div class="b" style="left:309px;top:648px;background:#f8eefa"><svg style="left:5.7px;top:5.5px" width="13.33" height="13.33" viewBox="0 0 24 24" fill="#1a1650"><path d="M17.21 9l-4.38-6.56a1 1 0 0 0-1.66 0L6.79 9H2a1 1 0 0 0-1 1l.04.27 2.54 9.27A2 2 0 0 0 5.5 21h13a2 2 0 0 0 1.93-1.46l2.54-9.27L23 10a1 1 0 0 0-1-1h-4.79zM9 9l3-4.4L15 9H9zm3 8a2 2 0 1 1 0-4 2 2 0 0 1 0 4z"/></svg></div>
<div class="b" style="left:337px;top:648px;background:#fcefd3"><svg style="left:5.7px;top:5.5px" width="13.33" height="13.33" viewBox="0 0 24 24" fill="#1a1650"><path fill-rule="evenodd" d="M12 18.2C8.2 18.2 5.3 15.6 5.3 12C5.3 9.8 6.2 8 7.2 6.8C7.2 8.6 8 9.8 9.2 10.2C9 6.5 10.5 3 12.6 0.9C12.4 4 14 5.6 15.8 7.4C17.8 9.3 19 11 19 13.2C19 16.1 15.9 18.2 12 18.2ZM12.6 15.6C14.4 15.6 15.8 14.3 15.8 12.7C15.8 11.3 14.8 10.2 13.6 9.4C13.8 11 13 12.2 11.8 12.6C11.6 13.9 11.5 15.6 12.6 15.6Z"/></svg></div>
<div class="b" style="left:365px;top:648px;background:#fde7eb"><svg style="left:5.7px;top:5.5px" width="13.33" height="13.33" viewBox="0 0 24 24" fill="#1a1650"><path d="M16 13h-3V3h-2v10H8l4 4 4-4zM4 19v2h16v-2H4z"/></svg></div>
<div class="b" style="left:393px;top:648px;background:#e9f9e7"><svg style="left:5.7px;top:5.5px" width="13.33" height="13.33" viewBox="0 0 24 24" fill="#1a1650"><path d="M20 4H4c-1.11 0-1.99.89-1.99 2L2 18c0 1.11.89 2 2 2h16c1.11 0 2-.89 2-2V6c0-1.11-.89-2-2-2zm0 14H4v-6h16v6zm0-10H4V6h16v2z"/></svg></div>
<div class="b" style="left:421px;top:648px;background:#e8f3fd"><svg style="left:5.7px;top:5.5px" width="13.33" height="13.33" viewBox="0 0 24 24" fill="#1a1650"><path d="M11 21h-1l1-7H7.5c-.58 0-.57-.32-.38-.66.19-.34.05-.08.07-.12C8.48 10.94 10.42 7.54 13 3h1l-1 7h3.5c.49 0 .56.33.47.51l-.07.15C12.96 17.55 11 21 11 21z"/></svg></div>
<span class="t num" style="left:467.5px;top:651.55px;letter-spacing:-0.633px;">9.9K</span>
<span class="t num" style="left:617.5px;top:651.55px;">4</span>
<div class="t num ch" style="left:747.5px;top:651.55px"><span><i class="one"></i>0</span><svg style="margin:0 6.3px 0 5px;align-self:center;position:relative;top:0px" width="13" height="8" viewBox="0 0 13 8"><path d="M0 4h12M8.6 0.8l3.3 3.2-3.3 3.2" fill="none" stroke="#c6c6c6" stroke-width="1.35"/></svg><span>4</span><svg style="margin:0 4px 0 5.6px" width="7" height="7" viewBox="0 0 7 7"><path d="M3.5 6.6V1.6" fill="none" stroke="#9cdc82" stroke-width="1.3"/><path d="M0.9 3.6l2.6-2.5 2.6 2.5" fill="none" stroke="#74cf52" stroke-width="1.5" stroke-linecap="round"/></svg><span style="color:#6cbf55">6</span></div>
<div class="ln" style="top:688px"></div>
<span class="t kw" style="left:7.5px;top:704.10px;letter-spacing:0.482px;">deska snowboardowa</span>
<span class="t url" style="left:7.5px;top:719.67px;letter-spacing:0.368px;">supersportowy.pl/c/sprzet-snowboardowy/</span>
<span class="t url" style="left:7.5px;top:731.67px;letter-spacing:0.367px;">deski-snowboardowe/</span>
<div class="s" style="left:258px;top:708px"><svg width="9" height="11" viewBox="0 0 9 11"><path d="M0.3 0.3H5L7.9 3.2V10H0.3Z" fill="#737197"/><path d="M5.1 1.3V3.2H7Z" fill="#fff" opacity=".75"/><circle cx="2.2" cy="4.9" r="0.95" fill="#fff"/><path d="M1.4 8.7L4.1 6.2L5.4 7.2L6.9 5.8V8.7Z" fill="#fff"/></svg></div>
<div class="s" style="left:268px;top:708px"><svg width="12" height="11" viewBox="0 0 12 11"><path d="M0.6 6.6V0.6H8.8" fill="none" stroke="#737197" stroke-width="1.1"/><path d="M2.6 2.7h8v5.5H7l-1.1 1.6-1.1-1.6H2.6z" fill="none" stroke="#737197" stroke-width="1.1"/></svg></div>
<div class="b" style="left:309px;top:712px;background:#f8eefa"><svg style="left:5.7px;top:5.5px" width="13.33" height="13.33" viewBox="0 0 24 24" fill="#1a1650"><path d="M17.21 9l-4.38-6.56a1 1 0 0 0-1.66 0L6.79 9H2a1 1 0 0 0-1 1l.04.27 2.54 9.27A2 2 0 0 0 5.5 21h13a2 2 0 0 0 1.93-1.46l2.54-9.27L23 10a1 1 0 0 0-1-1h-4.79zM9 9l3-4.4L15 9H9zm3 8a2 2 0 1 1 0-4 2 2 0 0 1 0 4z"/></svg></div>
<div class="b" style="left:337px;top:712px;background:#fcefd3"><svg style="left:5.7px;top:5.5px" width="13.33" height="13.33" viewBox="0 0 24 24" fill="#1a1650"><path d="M17 12h2L12 2 5.05 12H7l-3.9 6h6.92v4h3.95v-4H21z"/></svg></div>
<div class="b" style="left:365px;top:712px;background:#fde7eb"><svg style="left:5.7px;top:5.5px" width="13.33" height="13.33" viewBox="0 0 24 24" fill="#1a1650"><path d="M16 13h-3V3h-2v10H8l4 4 4-4zM4 19v2h16v-2H4z"/></svg></div>
<div class="b" style="left:393px;top:712px;background:#e9f9e7"><svg style="left:5.7px;top:5.5px" width="13.33" height="13.33" viewBox="0 0 24 24" fill="#1a1650"><path d="M20 4H4c-1.11 0-1.99.89-1.99 2L2 18c0 1.11.89 2 2 2h16c1.11 0 2-.89 2-2V6c0-1.11-.89-2-2-2zm0 14H4v-6h16v6zm0-10H4V6h16v2z"/></svg></div>
<div class="b" style="left:421px;top:712px;background:#e8f3fd"><svg style="left:5.7px;top:5.5px" width="13.33" height="13.33" viewBox="0 0 24 24" fill="#1a1650"><path d="M11 21h-1l1-7H7.5c-.58 0-.57-.32-.38-.66.19-.34.05-.08.07-.12C8.48 10.94 10.42 7.54 13 3h1l-1 7h3.5c.49 0 .56.33.47.51l-.07.15C12.96 17.55 11 21 11 21z"/></svg></div>
<span class="t num" style="left:467.5px;top:716.05px;letter-spacing:-0.633px;">9.9K</span>
<span class="t num" style="left:617.5px;top:716.05px;">5</span>
<div class="t num ch" style="left:747.5px;top:716.05px"><span>33</span><svg style="margin:0 6.3px 0 5px;align-self:center;position:relative;top:0px" width="13" height="8" viewBox="0 0 13 8"><path d="M0 4h12M8.6 0.8l3.3 3.2-3.3 3.2" fill="none" stroke="#c6c6c6" stroke-width="1.35"/></svg><span>5</span><svg style="margin:0 4px 0 5.6px" width="7" height="7" viewBox="0 0 7 7"><path d="M3.5 6.6V1.6" fill="none" stroke="#9cdc82" stroke-width="1.3"/><path d="M0.9 3.6l2.6-2.5 2.6 2.5" fill="none" stroke="#74cf52" stroke-width="1.5" stroke-linecap="round"/></svg><span style="color:#6cbf55">28</span></div>
</body></html>
